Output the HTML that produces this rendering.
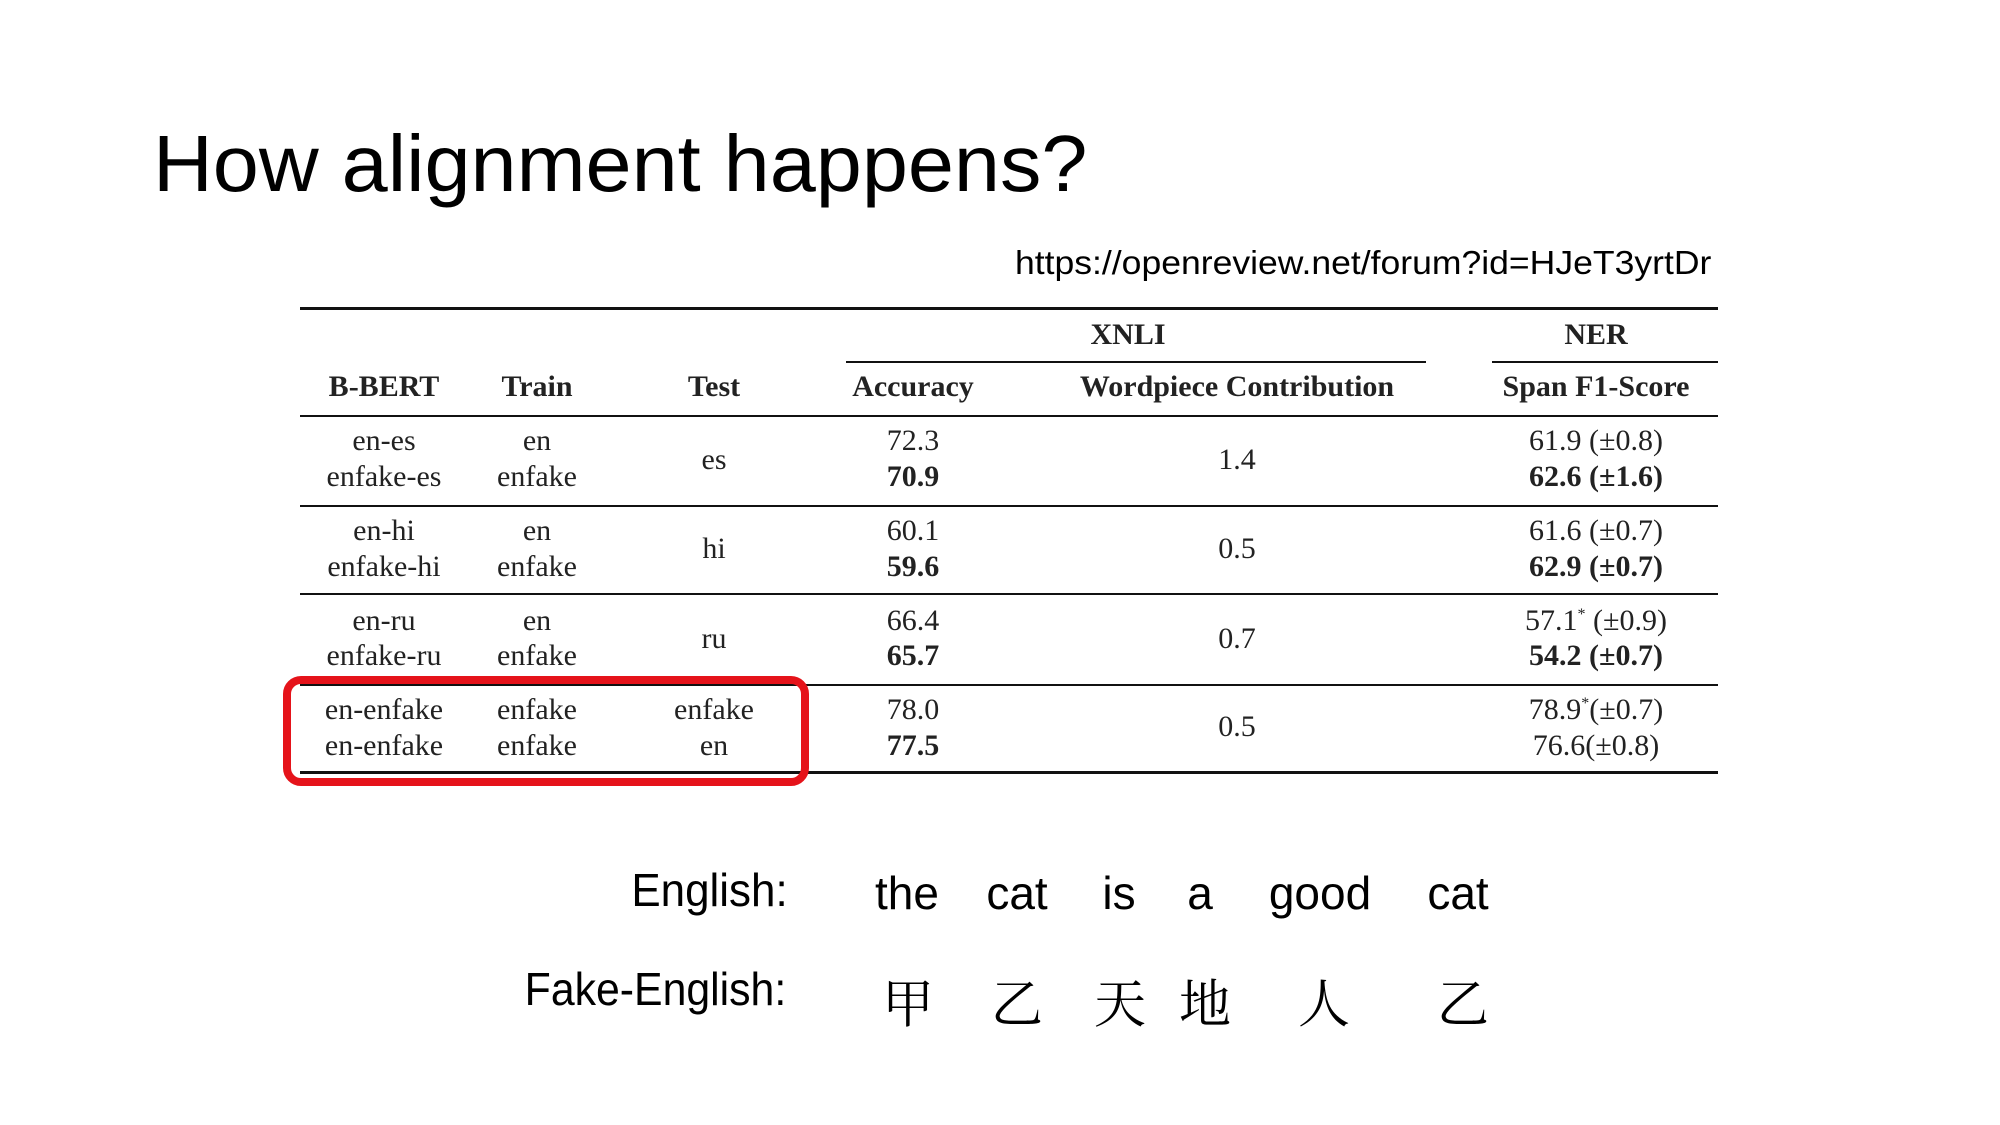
<!DOCTYPE html>
<html><head><meta charset="utf-8"><style>
body{margin:0;width:2000px;height:1125px;background:#fff;position:relative;overflow:hidden}
.a{position:absolute;white-space:nowrap}
.c{transform:translate(-50%,-50%)}
.s{font-family:"Liberation Serif",serif;font-size:30px;color:#222;line-height:1}
.b{font-weight:bold}
.ln{position:absolute;background:#111}
.sans{font-family:"Liberation Sans",sans-serif;color:#000}
.cj{font-family:"Liberation Serif","Noto Serif CJK SC",serif;font-size:52px;color:#000}
</style></head><body>
<div class="a sans" style="left:153px;top:124px;font-size:80px;line-height:1;transform:scaleX(1.035);transform-origin:left">How alignment happens?</div>
<div class="a sans" style="left:1015px;top:246px;font-size:33px;line-height:1;transform:scaleX(1.077);transform-origin:left">https://openreview.net/forum?id=HJeT3yrtDr</div>

<div class="ln" style="left:300px;top:307px;width:1418px;height:3px"></div>
<div class="ln" style="left:846px;top:361px;width:580px;height:2px"></div>
<div class="ln" style="left:1492px;top:361px;width:226px;height:2px"></div>
<div class="ln" style="left:300px;top:415px;width:1418px;height:2px"></div>
<div class="ln" style="left:300px;top:505px;width:1418px;height:2px"></div>
<div class="ln" style="left:300px;top:593px;width:1418px;height:2px"></div>
<div class="ln" style="left:300px;top:684px;width:1418px;height:2px"></div>
<div class="ln" style="left:300px;top:771px;width:1418px;height:3px"></div>

<div class="a c s b" style="left:1128px;top:335px">XNLI</div>
<div class="a c s b" style="left:1596px;top:335px">NER</div>
<div class="a c s b" style="left:384px;top:387px">B-BERT</div>
<div class="a c s b" style="left:537px;top:387px">Train</div>
<div class="a c s b" style="left:714px;top:387px">Test</div>
<div class="a c s b" style="left:913px;top:387px">Accuracy</div>
<div class="a c s b" style="left:1237px;top:387px">Wordpiece Contribution</div>
<div class="a c s b" style="left:1596px;top:387px">Span F1-Score</div>

<div class="a c s" style="left:384px;top:441px">en-es</div>
<div class="a c s" style="left:384px;top:477px">enfake-es</div>
<div class="a c s" style="left:537px;top:441px">en</div>
<div class="a c s" style="left:537px;top:477px">enfake</div>
<div class="a c s" style="left:714px;top:460px">es</div>
<div class="a c s" style="left:913px;top:441px">72.3</div>
<div class="a c s b" style="left:913px;top:477px">70.9</div>
<div class="a c s" style="left:1237px;top:460px">1.4</div>
<div class="a c s" style="left:1596px;top:441px">61.9 (±0.8)</div>
<div class="a c s b" style="left:1596px;top:477px">62.6 (±1.6)</div>

<div class="a c s" style="left:384px;top:531px">en-hi</div>
<div class="a c s" style="left:384px;top:567px">enfake-hi</div>
<div class="a c s" style="left:537px;top:531px">en</div>
<div class="a c s" style="left:537px;top:567px">enfake</div>
<div class="a c s" style="left:714px;top:549px">hi</div>
<div class="a c s" style="left:913px;top:531px">60.1</div>
<div class="a c s b" style="left:913px;top:567px">59.6</div>
<div class="a c s" style="left:1237px;top:549px">0.5</div>
<div class="a c s" style="left:1596px;top:531px">61.6 (±0.7)</div>
<div class="a c s b" style="left:1596px;top:567px">62.9 (±0.7)</div>

<div class="a c s" style="left:384px;top:621px">en-ru</div>
<div class="a c s" style="left:384px;top:656px">enfake-ru</div>
<div class="a c s" style="left:537px;top:621px">en</div>
<div class="a c s" style="left:537px;top:656px">enfake</div>
<div class="a c s" style="left:714px;top:639px">ru</div>
<div class="a c s" style="left:913px;top:621px">66.4</div>
<div class="a c s b" style="left:913px;top:656px">65.7</div>
<div class="a c s" style="left:1237px;top:639px">0.7</div>
<div class="a c s" style="left:1596px;top:621px">57.1<sup style="font-size:16px">*</sup> (±0.9)</div>
<div class="a c s b" style="left:1596px;top:656px">54.2 (±0.7)</div>

<div class="a c s" style="left:384px;top:710px">en-enfake</div>
<div class="a c s" style="left:384px;top:746px">en-enfake</div>
<div class="a c s" style="left:537px;top:710px">enfake</div>
<div class="a c s" style="left:537px;top:746px">enfake</div>
<div class="a c s" style="left:714px;top:710px">enfake</div>
<div class="a c s" style="left:714px;top:746px">en</div>
<div class="a c s" style="left:913px;top:710px">78.0</div>
<div class="a c s b" style="left:913px;top:746px">77.5</div>
<div class="a c s" style="left:1237px;top:727px">0.5</div>
<div class="a c s" style="left:1596px;top:710px">78.9<sup style="font-size:16px">*</sup>(±0.7)</div>
<div class="a c s" style="left:1596px;top:746px">76.6(±0.8)</div>

<div class="a" style="left:283px;top:676px;width:510px;height:94px;border:8px solid #e5131a;border-radius:18px"></div>

<div class="a sans" style="right:1212px;top:867px;font-size:46px;line-height:1;transform:scaleX(0.955);transform-origin:right">English:</div>
<div class="a c sans" style="left:907px;top:893px;font-size:46px">the</div>
<div class="a c sans" style="left:1017px;top:893px;font-size:46px">cat</div>
<div class="a c sans" style="left:1119px;top:893px;font-size:46px">is</div>
<div class="a c sans" style="left:1200px;top:893px;font-size:46px">a</div>
<div class="a c sans" style="left:1320px;top:893px;font-size:46px">good</div>
<div class="a c sans" style="left:1458px;top:893px;font-size:46px">cat</div>
<div class="a sans" style="right:1214px;top:966px;font-size:46px;line-height:1;transform:scaleX(0.93);transform-origin:right">Fake-English:</div>
<div class="a c cj" style="left:908px;top:1000px">甲</div>
<div class="a c cj" style="left:1017px;top:1000px">乙</div>
<div class="a c cj" style="left:1120px;top:1000px">天</div>
<div class="a c cj" style="left:1205px;top:1000px">地</div>
<div class="a c cj" style="left:1324px;top:1000px">人</div>
<div class="a c cj" style="left:1463px;top:1000px">乙</div>
</body></html>
